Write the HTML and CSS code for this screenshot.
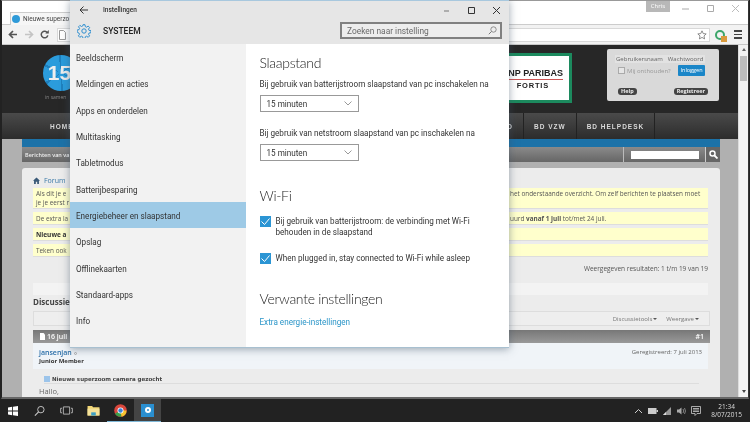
FILE: index.html
```html
<!DOCTYPE html>
<html lang="nl">
<head>
<meta charset="utf-8">
<title>Instellingen</title>
<link rel="stylesheet" href="styles.css">
</head>
<body>
<div class="desktop">
  <div class="browser">
    <div class="tabstrip">
      <div class="tab"><span class="favicon"></span><span class="tab-title">Nieuwe superzo</span></div>
      <div class="win-user">Chris</div>
      <div class="win-btns">
        <svg width="9" height="9" viewBox="0 0 9 9"><path d="M1 5h7" stroke="#aaa" fill="none"/></svg>
        <svg width="9" height="9" viewBox="0 0 9 9"><path d="M1.500 1.500h6v6h-6z" stroke="#aaa" fill="none"/></svg>
        <svg width="9" height="9" viewBox="0 0 9 9"><path d="M1 1l7 7M8 1l-7 7" stroke="#bbb" fill="none"/></svg>
      </div>
    </div>
    <div class="toolbar">
      <svg class="nav-ico" width="9" height="9" viewBox="0 0 9 9"><path d="M9 4.500H1.500M5 1L1.500 4.500 5 8" stroke="#555" stroke-width="1.700" fill="none"/></svg>
      <svg class="nav-ico nav-ico-fwd" width="9" height="9" viewBox="0 0 9 9"><path d="M0 4.500h7.500M4 1l3.500 3.500L4 8" stroke="#c4c4c4" stroke-width="1.700" fill="none"/></svg>
      <svg class="nav-ico nav-ico-reload" width="9" height="9" viewBox="0 0 9 9"><path d="M7.500 3A3.300 3.300 0 1 0 7.800 5.300" stroke="#555" stroke-width="1.500" fill="none"/><path d="M5.300 3.500h3.500V0z" fill="#555"/></svg>
      <div class="omnibox">
        <svg width="7" height="10" viewBox="0 0 7 10"><path d="M.5.500h4l2 2v7h-6z" fill="#fff" stroke="#999"/></svg>
        <svg class="star" width="10" height="10" viewBox="0 0 12 12"><path d="M6 1l1.500 3.300 3.500.4-2.600 2.400.7 3.600L6 8.900l-3.100 1.800.7-3.600L1 4.700l3.500-.4z" fill="none" stroke="#777"/></svg>
      </div>
      <div class="ext"><span class="ext-badge"></span></div>
      <div class="menu-btn"><span></span><span></span><span></span></div>
    </div>
    <div class="viewport">
      <div class="page">
        <header class="site-head">
          <div class="logo"><div class="logo-disc">15</div><div class="logo-sub">in samen</div></div>
          <div class="sponsor"><div class="sponsor-name">NP PARIBAS</div><div class="sponsor-sub">FORTIS</div></div>
          <form class="login">
            <div class="login-row login-top"><span class="login-field">Gebruikersnaam</span><span class="login-field">Wachtwoord</span></div>
            <div class="login-row login-mid"><span class="login-check"></span><span class="login-remember">Mij onthouden?</span><span class="login-btn">Inloggen</span></div>
            <div class="login-row login-low"><span class="pill">Help</span><span class="pill">Registreer</span></div>
          </form>
        </header>
        <nav class="site-nav">
          <span class="nav-home">HOME</span>
          <span class="nav-item nav-cut">D</span>
          <span class="nav-item">BD VZW</span>
          <span class="nav-item">BD HELPDESK</span>
        </nav>
        <div class="blue-strip"></div>
        <div class="sub-bar">
          <span class="sub-text">Berichten van va</span>
          <div class="sub-search"><span class="search-input"></span></div>
          <div class="sub-go"><svg width="9" height="9" viewBox="0 0 9 9"><circle cx="3.500" cy="3.500" r="2.500" stroke="#fff" stroke-width="1.500" fill="none"/><path d="M5.500 5.500L8.500 8.500" stroke="#fff" stroke-width="1.800"/></svg></div>
        </div>
        <main class="panel">
          <div class="crumb"><svg width="7" height="7" viewBox="0 0 8 8"><path d="M4 .5L0 4.200h1.200V8h2V5.500h1.600V8h2V4.200H8z" fill="#3a5a78"/></svg><span>Forum</span></div>
          <div class="notice notice-tall"><span>Als dit je e<br>je je eerst r</span><span>het onderstaande overzicht. Om zelf berichten te plaatsen moet</span></div>
          <div class="notice"><span>De extra la</span><span>uurd <b>vanaf 1 juli</b> tot/met 24 juli.</span></div>
          <div class="notice notice-strong"><b>Nieuwe a</b></div>
          <div class="notice"><span>Teken ook</span></div>
          <div class="results">Weergegeven resultaten: 1 t/m 19 van 19</div>
          <div class="light-bar"></div>
          <h2 class="disc-title">Discussie:</h2>
          <div class="tools"><span>Discussietools<i class="caret"></i></span><span>Weergave<i class="caret"></i></span></div>
          <div class="post-head"><span class="post-date"><svg width="5" height="7" viewBox="0 0 5 7"><path d="M0 0h3.500L5 1.500V7H0z" fill="#fff"/></svg>16 juli</span><span class="post-num">#1</span></div>
          <div class="post-user">
            <div><div class="user-name">jansenjan <i class="user-dot"></i></div><div class="user-rank">Junior Member</div></div>
            <div class="user-meta">Geregistreerd: 7 juli 2013</div>
          </div>
          <div class="post-title"><i class="post-ico"></i>Nieuwe superzoom camera gezocht</div>
          <div class="post-body">Hallo,</div>
        </main>
      </div>
      <div class="scrollbar"><i class="sb-up"></i><span class="sb-thumb"></span><i class="sb-down"></i></div>
    </div>
  </div>

  <footer class="taskbar">
    <div class="task-left">
      <div class="task-btn"><svg width="10" height="10" viewBox="0 0 12 12"><path d="M0 1.800L5 1v4.500H0zM6 .9L12 0v5.500H6zM0 6.500h5V11l-5-.8zM6 6.500h6V12l-6-.9z" fill="#fff"/></svg></div>
      <div class="task-btn"><svg width="11" height="12" viewBox="0 0 12 12"><circle cx="7.500" cy="4.500" r="3.500" stroke="#ccc" fill="none"/><path d="M5 7L1 11" stroke="#ccc" stroke-width="1.200"/></svg></div>
      <div class="task-btn"><svg width="13" height="9" viewBox="0 0 14 10"><path d="M3.500 1h7v8h-7zM2 2.500H.5v5H2M12 2.500h1.500v5H12" stroke="#bbb" fill="none"/></svg></div>
      <div class="task-btn"><svg width="13" height="11" viewBox="0 0 14 12"><path d="M.5 1h5l1 1.500h7V11.500H.5z" fill="#f2d675"/><path d="M.5 4h13v7.500H.5z" fill="#f5e29a"/><path d="M4.500 8h5v3.500h-5z" fill="#3d9fc4"/></svg></div>
      <div class="task-btn task-open"><svg width="13" height="13" viewBox="0 0 13 13"><circle cx="6.500" cy="6.500" r="6.300" fill="#d9473d"/><path d="M6.500 6.500L1 9.800A6.300 6.300 0 0 0 7.500 12.700z" fill="#3aa14a"/><path d="M6.500 6.500h6A6.300 6.300 0 0 1 7.500 12.700z" fill="#f4c430"/><circle cx="6.500" cy="6.500" r="3" fill="#fff"/><circle cx="6.500" cy="6.500" r="2.200" fill="#3b82d8"/></svg></div>
      <div class="task-btn task-active"><span class="settings-tile"><i></i></span></div>
    </div>
    <div class="tray">
      <svg width="9" height="6" viewBox="0 0 9 6"><path d="M1 5l3.500-3.500L8 5" stroke="#ccc" fill="none"/></svg>
      <svg width="10" height="6" viewBox="0 0 10 6"><path d="M0 0h8.500v6H0z" fill="#ccc"/><path d="M8.500 2H10v2H8.500z" fill="#ccc"/></svg>
      <svg width="9" height="8" viewBox="0 0 9 8"><path d="M0 8L8 0v8z" fill="#999"/><path d="M0 8l3-3v3z" fill="#ddd"/></svg>
      <svg width="9" height="8" viewBox="0 0 9 8"><path d="M0 2.500h2L4.500 .5v7L2 5.500H0z" fill="#aaa"/><path d="M6 2q1.500 2 0 4M7.500 1q2 3 0 6" stroke="#aaa" fill="none" stroke-width=".7"/></svg>
      <svg width="10" height="10" viewBox="0 0 10 10"><path d="M.5.5h9v7H6L4 9.500v-2H.5zM2 2.500h6M2 4h6M2 5.500h6" stroke="#ccc" fill="none" stroke-width=".8"/></svg>
      <div class="clock"><div>21:34</div><div>8/07/2015</div></div>
    </div>
  </footer>

  <section class="settings">
    <div class="set-top">
      <div class="set-titlebar">
        <svg class="set-back" width="9" height="8" viewBox="0 0 9 8"><path d="M9 4H1M4.500.5L1 4l3.500 3.500" stroke="#333" fill="none"/></svg>
        <span class="set-title">Instellingen</span>
        <div class="set-ctrl">
          <svg width="9" height="9" viewBox="0 0 9 9"><path d="M2 5h5" stroke="#777" fill="none"/></svg>
          <svg width="9" height="9" viewBox="0 0 9 9"><path d="M1.500 1.500h6v6h-6z" stroke="#333" fill="none"/></svg>
          <svg width="9" height="9" viewBox="0 0 9 9"><path d="M1 1l7 7M8 1l-7 7" stroke="#333" fill="none"/></svg>
        </div>
      </div>
      <div class="set-header">
        <svg class="set-gear" width="14" height="14" viewBox="0 0 14 14"><g fill="none" stroke="#2f8fd0"><circle cx="7" cy="7" r="2.200"/><path d="M6 .7h2l.3 1.900 1.300.6 1.600-1.100 1.400 1.400-1.100 1.600.6 1.300 1.900.3v2l-1.900.3-.6 1.300 1.100 1.600-1.400 1.400-1.600-1.100-1.300.6-.3 1.900H6l-.3-1.900-1.300-.6-1.600 1.100-1.400-1.400 1.100-1.600-.6-1.300L.1 8V6l1.900-.3.600-1.300-1.100-1.600 1.400-1.400 1.600 1.100 1.300-.6z"/></g></svg>
        <span class="set-sys">SYSTEEM</span>
        <div class="set-search"><span>Zoeken naar instelling</span><svg width="9" height="9" viewBox="0 0 9 9"><circle cx="5.500" cy="3.500" r="2.700" stroke="#777" fill="none" stroke-width=".8"/><path d="M3.500 5.500L.8 8.200" stroke="#777"/></svg></div>
      </div>
    </div>
    <div class="set-body">
      <ul class="set-nav">
        <li>Beeldscherm</li>
        <li>Meldingen en acties</li>
        <li>Apps en onderdelen</li>
        <li>Multitasking</li>
        <li>Tabletmodus</li>
        <li>Batterijbesparing</li>
        <li class="is-active">Energiebeheer en slaapstand</li>
        <li>Opslag</li>
        <li>Offlinekaarten</li>
        <li>Standaard-apps</li>
        <li>Info</li>
      </ul>
      <div class="set-main">
        <h1 class="h-first">Slaapstand</h1>
        <p class="label">Bij gebruik van batterijstroom slaapstand van pc inschakelen na</p>
        <div class="select"><span>15 minuten</span><svg width="8" height="5" viewBox="0 0 8 5"><path d="M.5.5L4 4 7.500.5" stroke="#999" fill="none"/></svg></div>
        <p class="label label-2">Bij gebruik van netstroom slaapstand van pc inschakelen na</p>
        <div class="select"><span>15 minuten</span><svg width="8" height="5" viewBox="0 0 8 5"><path d="M.5.5L4 4 7.500.5" stroke="#999" fill="none"/></svg></div>
        <h1 class="h-wifi">Wi-Fi</h1>
        <div class="check"><span class="box"><svg width="11" height="11" viewBox="0 0 11 11"><path d="M1.500 5.500L4.500 8.500 9.500 2.500" stroke="#fff" fill="none"/></svg></span><span>Bij gebruik van batterijstroom: de verbinding met Wi-Fi behouden in de slaapstand</span></div>
        <div class="check check-2"><span class="box"><svg width="11" height="11" viewBox="0 0 11 11"><path d="M1.500 5.500L4.500 8.500 9.500 2.500" stroke="#fff" fill="none"/></svg></span><span>When plugged in, stay connected to Wi-Fi while asleep</span></div>
        <h1 class="h-rel">Verwante instellingen</h1>
        <a class="link">Extra energie-instellingen</a>
      </div>
    </div>
  </section>
</div>
</body>
</html>
```
FILE: styles.css
```css
* { box-sizing: border-box; }
html, body { margin: 0; padding: 0; }
body { width: 750px; height: 422px; overflow: hidden; background: #222; font-family: "Open Sans", "Noto Sans", sans-serif; }
.desktop { position: relative; width: 750px; height: 422px; display: flex; flex-direction: column; overflow: hidden; filter: blur(.35px); }

/* browser */
.browser { flex: 1; min-height: 0; display: flex; flex-direction: column; margin: 0 1px 0 1px; background: #fff; border-left: 1px solid #222; border-right: 1px solid #333; border-top: 1px solid #999; border-bottom: 2px solid #666; overflow: hidden; }
.tabstrip { height: 24px; flex: none; display: flex; align-items: flex-start; background: #fff; padding-left: 8px; border-bottom: 1px solid #ccc; }
.tab { width: 60px; height: 13px; margin-top: 11px; display: flex; align-items: center; gap: 3px; padding-left: 1px; border: 1px solid #ccc; border-bottom: none; border-right: none; background: #f6f6f6; font: 6.500px "Roboto", sans-serif; color: #444; white-space: nowrap; }
.favicon { width: 8px; height: 8px; border-radius: 50%; background: #2e9ad8; flex: none; }
.win-user { margin-left: auto; margin-right: 11px; width: 24px; height: 11px; background: #b8b8b8; color: #fff; font-size: 6px; text-align: center; line-height: 11px; }
.win-btns { display: flex; gap: 16px; padding: 3px 8px 0 0; }
.toolbar { height: 20px; flex: none; display: flex; align-items: center; background: #f2f2f2; padding: 0 6px 0 6px; border-bottom: 1px solid #c8c8c8; }
.nav-ico { margin-right: 8px; flex: none; }
.nav-ico-fwd { margin-right: 6px; }
.omnibox { flex: 1; height: 14px; background: #fff; border: 1px solid #d8d8d8; display: flex; align-items: center; justify-content: space-between; padding: 0 2px 0 1px; }
.ext { width: 10px; height: 10px; margin: 0 9px 0 5px; border-radius: 50%; border: 2px solid #3ca66a; position: relative; flex: none; }
.ext-badge { position: absolute; right: -4px; bottom: -4px; width: 6px; height: 6px; background: #d99a3c; }
.menu-btn { width: 8px; display: flex; flex-direction: column; gap: 2px; flex: none; }
.menu-btn span { display: block; height: 1.500px; background: #444; }
.viewport { flex: 1; min-height: 0; display: flex; }
.page { flex: 1; min-width: 0; background: #b0b0b0; display: flex; flex-direction: column; overflow: hidden; }
.scrollbar { width: 10px; flex: none; background: #f2f2f2; display: flex; flex-direction: column; align-items: center; padding-top: 3px; border-left: 1px solid #ddd; }
.sb-up { width: 0; height: 0; border: 2px solid transparent; border-bottom: 3px solid #666; border-top: 0; }
.sb-thumb { width: 7px; height: 25px; background: #bdbdbd; margin-top: 5px; }
.sb-down { margin-top: auto; margin-bottom: 4px; width: 0; height: 0; border: 2px solid transparent; border-top: 3px solid #444; border-bottom: 0; }

/* site header */
.site-head { height: 68px; flex: none; background: #272727; display: flex; align-items: flex-start; padding: 4px 0 0 41px; }
.logo { width: 36px; flex: none; }
.logo-disc { width: 36px; height: 36px; border-radius: 50%; background: repeating-conic-gradient(#2b9cdc 0 52deg, #1f80bd 52deg 60deg); color: #eee; font: bold 21px/36px "Liberation Sans", sans-serif; text-align: center; padding-right: 3px; margin-top: 6px; }
.logo-sub { font-size: 5px; color: #888; white-space: nowrap; margin-top: 3px; margin-left: 2px; }
.sponsor { width: 150px; height: 50px; margin: 4px 0 0 343px; background: #fff; border: 3px solid #1c8a5e; text-align: right; padding: 12px 6px 0 0; font-family: "Liberation Sans", sans-serif; flex: none; }
.sponsor-name { font-size: 9px; font-weight: bold; color: #222; border-bottom: 1px solid #c55; line-height: 10px; padding-bottom: 1px; }
.sponsor-sub { font-size: 7.500px; font-weight: bold; color: #222; letter-spacing: .8px; padding-right: 14px; margin-top: 1px; line-height: 9px; }
.login { width: 112px; height: 52px; margin: 0 0 0 35px; background: #d9d9d9; border-radius: 2px; padding: 6px 14px 0 8px; font-size: 6px; color: #666; flex: none; }
.login-row { display: flex; align-items: center; }
.login-top { background: #e2e2e2; height: 8px; gap: 5px; padding-left: 1px; white-space: nowrap; }
.login-mid { margin-top: 2px; height: 11px; }
.login-check { width: 7px; height: 7px; border: 1px solid #aaa; background: #e6e6e6; margin-right: 2px; margin-left: 3px; flex: none; }
.login-remember { color: #999; white-space: nowrap; }
.login-btn { margin-left: auto; background: #1a86c8; color: #fff; height: 11px; border-radius: 1px; width: 27px; text-align: center; line-height: 11px; font-size: 5.500px; }
.login-low { justify-content: space-between; margin-top: 12px; margin-left: 3px; margin-right: -3px; }
.pill { background: #444; color: #eee; font-weight: bold; padding: 0 3px; border-radius: 3px; line-height: 7px; font-size: 5.500px; }

.site-nav { height: 26px; flex: none; display: flex; align-items: center; background: linear-gradient(#4a4a4a, #2c2c2c); color: #d8d8d8; font: bold 6.500px "Liberation Sans", sans-serif; letter-spacing: 1px; white-space: nowrap; }
.nav-home { margin-left: 48px; width: 426px; }
.nav-item { display: flex; align-items: center; height: 26px; padding: 0 10px; border-right: 1px solid #222; }
.nav-cut { padding-left: 0; width: 48px; justify-content: flex-end; }
.blue-strip { height: 8px; flex: none; background: #1c72a8; margin-left: 20px; margin-right: 18px; }
.sub-bar { height: 15px; flex: none; margin-left: 20px; margin-right: 18px; display: flex; align-items: center; background: linear-gradient(#8a8a8a, #666); color: #eee; font-size: 5.500px; font-weight: 600; padding-left: 3px; white-space: nowrap; }
.sub-search { margin-left: auto; width: 83px; height: 15px; border-left: 1px solid #bbb; border-right: 1px solid #ccc; display: flex; align-items: center; justify-content: center; }
.search-input { width: 68px; height: 8px; background: #fff; }
.sub-go { width: 14px; display: flex; justify-content: center; background: #666; height: 15px; align-items: center; }
.panel { flex: 1; min-height: 0; margin: 6px 18px 0 20px; background: #ececec; border-radius: 3px 3px 0 0; padding: 7px 10px 0 11px; font-size: 7px; color: #555; overflow: hidden; }
.crumb { display: flex; align-items: center; gap: 4px; height: 10px; color: #3a79a8; font-size: 7px; }
.notice { display: grid; grid-template-columns: 474px 1fr; background: #ffffcc; margin-top: 3px; height: 13px; padding: 0 3px; line-height: 13px; white-space: nowrap; overflow: hidden; font-size: 6.400px; border-bottom: 1px solid #ddd; color: #555; width: 675px; }
.notice-tall { height: 21px; line-height: 8.500px; padding-top: 2px; }
.notice-strong { color: #333; font-size: 6.500px; }
.results { text-align: right; margin-top: 6px; font-size: 6.500px; height: 11px; line-height: 11px; width: 675px; }
.light-bar { height: 12px; margin-top: 9px; background: #f3f3f3; width: 675px; }
.disc-title { margin: 1px 0 0; font-size: 8px; color: #444; font-weight: bold; height: 11px; line-height: 11px; white-space: nowrap; }
.tools { height: 15px; margin-top: 4px; background: #eee; border: 1px solid #ddd; display: flex; justify-content: flex-end; align-items: center; gap: 9px; padding-right: 10px; font-size: 6px; color: #777; width: 677px; }
.caret { display: inline-block; border: 2px solid transparent; border-top: 2px solid #555; border-bottom: 0; margin-left: 1px; vertical-align: middle; }
.post-head { height: 13px; margin-top: 4px; background: linear-gradient(#777, #999); color: #fff; display: flex; justify-content: space-between; align-items: center; padding: 0 6px 0 7px; width: 677px; font-weight: 600; font-size: 7px; }
.post-date { display: flex; align-items: center; gap: 2px; }
.post-user { height: 26px; background: #f0f4f8; display: flex; justify-content: space-between; padding: 5px 6px 0 6px; width: 675px; }
.user-name { color: #2a6ea8; font-weight: 600; font-size: 7px; line-height: 9px; }
.user-dot { display: inline-block; width: 3px; height: 3px; border: 1px solid #aaa; border-radius: 50%; }
.user-rank { font-weight: bold; color: #333; font-size: 6px; line-height: 8px; }
.user-meta { font-size: 6px; color: #666; line-height: 7px; padding-top: 1px; }
.post-title { font: bold 5.500px "DejaVu Sans", sans-serif; color: #444; margin-left: 11px; height: 15px; padding-top: 5px; border-bottom: 1px solid #ddd; width: 655px; display: flex; align-items: center; gap: 2px; }
.post-ico { width: 6px; height: 6px; background: #9cc4ea; }
.post-body { font-size: 7.500px; color: #666; padding: 2px 6px; }

/* taskbar */
.taskbar { height: 23px; flex: none; background: #222; display: flex; justify-content: space-between; align-items: stretch; }
.task-left { display: flex; }
.task-btn { width: 27px; display: flex; align-items: center; justify-content: center; }
.task-btn:first-child { width: 26px; }
.task-open { border-bottom: 1px solid #7fb8d8; }
.task-active { background: #444; border-bottom: 1px solid #7fb8d8; }
.settings-tile { width: 13px; height: 13px; background: #2a8fd0; display: flex; align-items: center; justify-content: center; }
.settings-tile i { width: 6px; height: 6px; border-radius: 50%; border: 2px solid #fff; }
.tray { display: flex; align-items: center; gap: 5px; padding-right: 8px; }
.clock { color: #ddd; font-size: 6.500px; line-height: 8px; text-align: center; margin-left: 5px; }

/* settings window */
.settings { position: absolute; left: 70px; top: 0; width: 439px; height: 348px; background: #fff; border-top: 1px solid #a8c8de; border-bottom: 1px solid #a8c0d0; box-shadow: 0 1px 8px rgba(60,80,100,.5); display: flex; flex-direction: column; font-family: "Roboto", "Open Sans", sans-serif; }
.set-top { height: 43px; flex: none; background: #e6e6e6; }
.set-titlebar { height: 18px; display: flex; align-items: center; padding-left: 9px; }
.set-title { margin-left: 15px; font-size: 6.500px; color: #333; font-weight: 500; }
.set-ctrl { margin-left: auto; display: flex; gap: 16px; padding-right: 8px; }
.set-header { height: 25px; display: flex; align-items: flex-start; padding: 3px 7px 0 7px; }
.set-gear { margin-top: 2px; }
.set-sys { margin-left: 12px; font-size: 8.500px; font-weight: 500; color: #222; line-height: 18px; }
.set-search { margin-left: auto; width: 162px; height: 17px; border: 2px solid #808080; background: #ededed; display: flex; align-items: center; justify-content: space-between; padding: 0 3px 0 5px; font-size: 8.400px; color: #6a6a6a; }
.set-body { flex: 1; min-height: 0; display: flex; }
.set-nav { width: 176px; flex: none; background: #f2f2f2; list-style: none; margin: 0; padding: 0; font-size: 8.150px; color: #333; }
.set-nav li { height: 26.340px; line-height: 28px; padding-left: 6px; white-space: nowrap; }
.set-nav .is-active { background: #9ecae6; }
.set-main { flex: 1; min-width: 0; padding: 10px 0 0 13.500px; color: #333; }
.set-main h1 { font-family: "Lato", "Roboto", sans-serif; font-size: 14px; font-weight: 300; letter-spacing: -.3px; margin: 0; color: #222; line-height: 18px; }
.label { margin: 0; font-size: 8.150px; line-height: 11px; white-space: nowrap; }
.h-first + .label { margin-top: 7px; }
.label-2 { margin-top: 16px; }
.select { width: 99px; height: 17px; border: 1px solid #999; margin-top: 5px; display: flex; align-items: center; justify-content: space-between; padding: 0 6px 0 6px; font-size: 8.150px; }
.h-wifi { margin-top: 26px !important; }
.check { display: flex; gap: 5px; font-size: 8.150px; line-height: 11px; width: 240px; margin-top: 11px; }
.check-2 { margin-top: 15px; white-space: nowrap; }
.box { width: 11px; height: 11px; background: #2b95d4; flex: none; display: block; }
.box svg { display: block; }
.h-rel { margin-top: 26px !important; }
.link { display: block; margin-top: 9px; font-size: 8.150px; color: #2a95c8; }
```
